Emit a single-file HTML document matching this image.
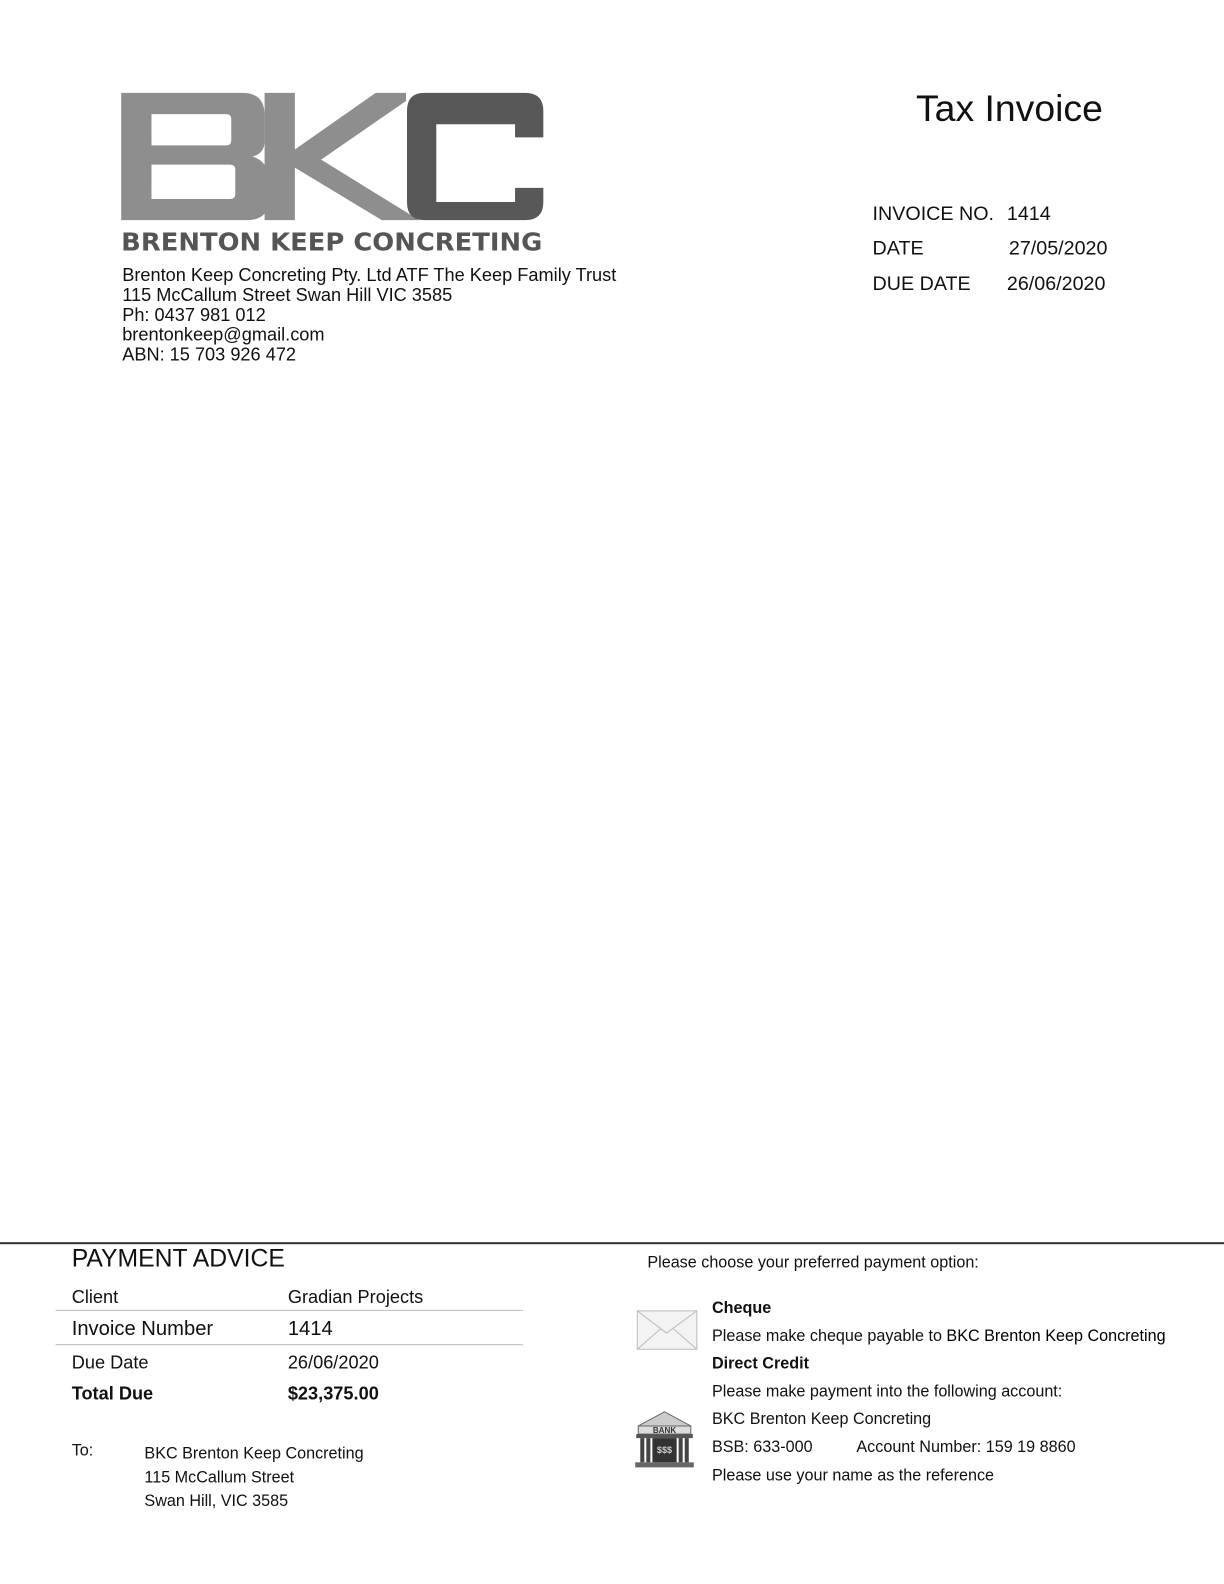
<!DOCTYPE html>
<html><head><meta charset="utf-8"><style>
body{margin:0;width:1224px;height:1584px;background:#fff;position:relative;font-family:"Liberation Sans",Arial,sans-serif;color:#111;overflow:hidden}
#w{position:absolute;left:0;top:0;width:1212px;height:1568px;transform:scale(1.0099);transform-origin:0 0}
.t{position:absolute;white-space:nowrap;line-height:1}
</style></head><body><div id="w">
<svg width="1212" height="400" style="position:absolute;left:0;top:0">
<g fill="#8e8e8e">
<path d="M120 92 H240 Q262 92 262 114 V140 Q262 152 250 155 Q266 160 266 178 V198 Q266 218 244 218 H120 Z M150 113 V144 H224 Q229 144 229 139 V118 Q229 113 224 113 Z M150 163 V197 H228 Q233 197 233 192 V168 Q233 163 228 163 Z" fill-rule="evenodd"/>
<polygon points="262,92 292,92 292,148 372,92 402,92 402,100 318,158 415,218 378,218 292,166 292,218 262,218"/>
</g>
<path fill="#585858" d="M420 92 H520 Q538 92 538 110 V136 H510 V123 H432 V200 H510 V186 H538 V200 Q538 218 520 218 H420 Q403 218 403 200 V110 Q403 92 420 92 Z"/>
<text x="120" y="248" font-family="DejaVu Sans,Liberation Sans,sans-serif" font-weight="bold" font-size="25" fill="#555" textLength="417" lengthAdjust="spacingAndGlyphs">BRENTON KEEP CONCRETING</text>
</svg>
<div class="t" style="left:121px;top:263px;font-size:18px;line-height:19.8px">Brenton Keep Concreting Pty. Ltd ATF The Keep Family Trust<br>115 McCallum Street Swan Hill VIC 3585<br>Ph: 0437 981 012<br>brentonkeep@gmail.com<br>ABN: 15 703 926 472</div>
<div class="t" style="left:907px;top:89px;font-size:37px">Tax Invoice</div>
<div class="t" style="left:864px;top:203px;font-size:19.5px">INVOICE NO.</div><div class="t" style="left:997px;top:203px;font-size:19.5px">1414</div>
<div class="t" style="left:864px;top:237px;font-size:19.5px">DATE</div><div class="t" style="left:999px;top:237px;font-size:19.5px">27/05/2020</div>
<div class="t" style="left:864px;top:272px;font-size:19.5px">DUE DATE</div><div class="t" style="left:997px;top:272px;font-size:19.5px">26/06/2020</div>
<div style="position:absolute;left:0;top:1230px;width:1212px;height:2px;background:#333"></div>
<div class="t" style="left:71px;top:1235px;font-size:24.5px">PAYMENT ADVICE</div>
<div class="t" style="left:71px;top:1275px;font-size:18px">Client</div><div class="t" style="left:285px;top:1275px;font-size:18px">Gradian Projects</div>
<div style="position:absolute;left:55px;top:1297px;width:463px;height:1px;background:#bbb"></div>
<div class="t" style="left:71px;top:1306px;font-size:20px">Invoice Number</div><div class="t" style="left:285px;top:1306px;font-size:20px">1414</div>
<div style="position:absolute;left:55px;top:1331px;width:463px;height:1px;background:#bbb"></div>
<div class="t" style="left:71px;top:1340px;font-size:18px">Due Date</div><div class="t" style="left:285px;top:1340px;font-size:18px">26/06/2020</div>
<div class="t" style="left:71px;top:1371px;font-size:18px;font-weight:bold">Total Due</div><div class="t" style="left:285px;top:1371px;font-size:18px;font-weight:bold">$23,375.00</div>
<div class="t" style="left:71px;top:1429px;font-size:16px">To:</div>
<div class="t" style="left:143px;top:1428px;font-size:16px;line-height:23.5px">BKC Brenton Keep Concreting<br>115 McCallum Street<br>Swan Hill, VIC 3585</div>
<div class="t" style="left:641px;top:1243px;font-size:16px">Please choose your preferred payment option:</div>
<svg width="62" height="42" style="position:absolute;left:630px;top:1297px"><rect x="1" y="1" width="59" height="38" fill="#f3f3f3" stroke="#bbb"/><path d="M1 1 L30 23 L60 1 M1 39 L24 19 M60 39 L37 19" fill="none" stroke="#bbb"/></svg>
<svg width="64" height="62" style="position:absolute;left:626px;top:1396px"><path d="M6 16 L32 2 L58 16 Z" fill="#ccc" stroke="#666"/><rect x="6" y="16" width="52" height="8" fill="#ddd" stroke="#666"/><text x="32" y="23" font-size="8" font-weight="bold" text-anchor="middle" fill="#333" font-family="Liberation Sans">BANK</text><rect x="4" y="24" width="56" height="4" fill="#555"/><rect x="8" y="28" width="4" height="24" fill="#444"/><rect x="14" y="28" width="4" height="24" fill="#444"/><rect x="20" y="28" width="24" height="24" fill="#333"/><text x="32" y="43" font-size="9" font-weight="bold" text-anchor="middle" fill="#ccc" font-family="Liberation Sans">$$$</text><rect x="46" y="28" width="4" height="24" fill="#444"/><rect x="52" y="28" width="4" height="24" fill="#444"/><rect x="3" y="52" width="58" height="5" fill="#666"/></svg>
<div class="t" style="left:705px;top:1288px;font-size:16px;font-weight:bold">Cheque</div>
<div class="t" style="left:705px;top:1316px;font-size:16px">Please make cheque payable to <span style="color:#000">BKC Brenton Keep Concreting</span></div>
<div class="t" style="left:705px;top:1343px;font-size:16px;font-weight:bold">Direct Credit</div>
<div class="t" style="left:705px;top:1371px;font-size:16px">Please make payment into the following account:</div>
<div class="t" style="left:705px;top:1398px;font-size:16px">BKC Brenton Keep Concreting</div>
<div class="t" style="left:705px;top:1426px;font-size:16px">BSB: 633-000</div><div class="t" style="left:848px;top:1426px;font-size:16px">Account Number: 159 19 8860</div>
<div class="t" style="left:705px;top:1454px;font-size:16px">Please use your name as the reference</div>
</div></body></html>
